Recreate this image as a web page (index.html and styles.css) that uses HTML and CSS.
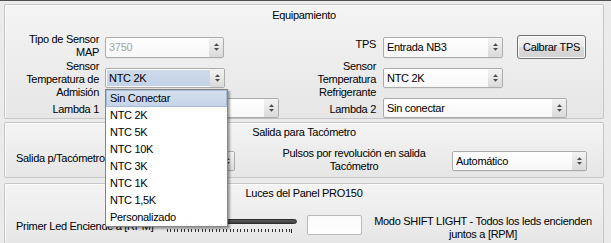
FILE: index.html
```html
<!DOCTYPE html>
<html lang="es">
<head>
<meta charset="utf-8">
<title>Equipamiento</title>
<link rel="stylesheet" href="styles.css">
</head>
<body>
<div class="window">
  <section class="group g-equip">
    <div class="gtitle">Equipamiento</div>
    <div class="eq-grid">
      <div class="lbl lbl-map">Tipo de Sensor<br>MAP</div>
      <div class="combo c-map disabled"><span class="val">3750</span><span class="arr"><svg width="7" height="10" viewBox="0 0 7 10"><path d="M1 4L3.5 1.3L6 4ZM1 6L3.5 8.7L6 6Z" fill="#4a4a4a"/></svg></span></div>
      <div class="lbl r lbl-tps">TPS</div>
      <div class="tps-cell">
        <div class="combo c-tps"><span class="val">Entrada NB3</span><span class="arr"><svg width="7" height="10" viewBox="0 0 7 10"><path d="M1 4L3.5 1.3L6 4ZM1 6L3.5 8.7L6 6Z" fill="#4a4a4a"/></svg></span></div>
        <button class="btn">Calbrar TPS</button>
      </div>

      <div class="lbl lbl-3">Sensor<br>Temperatura de<br>Admisión</div>
      <div class="combo c-iat focus"><span class="val">NTC 2K</span><span class="arr"><svg width="7" height="10" viewBox="0 0 7 10"><path d="M1 4L3.5 1.3L6 4ZM1 6L3.5 8.7L6 6Z" fill="#4a4a4a"/></svg></span></div>
      <div class="lbl r lbl-3">Sensor<br>Temperatura<br>Refrigerante</div>
      <div class="combo c-ect"><span class="val">NTC 2K</span><span class="arr"><svg width="7" height="10" viewBox="0 0 7 10"><path d="M1 4L3.5 1.3L6 4ZM1 6L3.5 8.7L6 6Z" fill="#4a4a4a"/></svg></span></div>

      <div class="lbl lbl-lam">Lambda 1</div>
      <div class="combo c-l1"><span class="val"></span><span class="arr"><svg width="7" height="10" viewBox="0 0 7 10"><path d="M1 4L3.5 1.3L6 4ZM1 6L3.5 8.7L6 6Z" fill="#4a4a4a"/></svg></span></div>
      <div class="lbl r lbl-lam">Lambda 2</div>
      <div class="combo c-l2"><span class="val">Sin conectar</span><span class="arr"><svg width="7" height="10" viewBox="0 0 7 10"><path d="M1 4L3.5 1.3L6 4ZM1 6L3.5 8.7L6 6Z" fill="#4a4a4a"/></svg></span></div>
    </div>
  </section>

  <section class="group g-tach">
    <div class="gtitle">Salida para Tacómetro</div>
    <div class="row2">
      <div class="lbl-sal">Salida p/Tacómetro</div>
      <div class="combo c-sal"><span class="val"></span><span class="arr"><svg width="7" height="10" viewBox="0 0 7 10"><path d="M1 4L3.5 1.3L6 4ZM1 6L3.5 8.7L6 6Z" fill="#4a4a4a"/></svg></span></div>
      <div class="lbl-pul">Pulsos por revolución en salida<br>Tacómetro</div>
      <div class="combo c-auto"><span class="val">Automático</span><span class="arr"><svg width="7" height="10" viewBox="0 0 7 10"><path d="M1 4L3.5 1.3L6 4ZM1 6L3.5 8.7L6 6Z" fill="#4a4a4a"/></svg></span></div>
    </div>
  </section>

  <section class="group g-leds">
    <div class="gtitle">Luces del Panel PRO150</div>
    <div class="row3">
      <div class="lbl-led">Primer Led Enciende a [RPM]</div>
      <div class="slider">
        <div class="groove"></div>
        <div class="ticks"></div>
      </div>
      <div class="edit"></div>
      <div class="lbl-shift">Modo SHIFT LIGHT - Todos los leds encienden<br>juntos a [RPM]</div>
    </div>
  </section>

  <ul class="popup">
    <li class="sel">Sin Conectar</li>
    <li>NTC 2K</li>
    <li>NTC 5K</li>
    <li>NTC 10K</li>
    <li>NTC 3K</li>
    <li>NTC 1K</li>
    <li>NTC 1,5K</li>
    <li>Personalizado</li>
  </ul>
</div>
</body>
</html>
```

FILE: styles.css
```css
html, body {
  margin: 0;
  padding: 0;
}
body {
  width: 611px;
  height: 243px;
  overflow: hidden;
  background: #ebebeb;
  font-family: "Liberation Sans", Arial, sans-serif;
  font-size: 11px;
  letter-spacing: -0.3px;
  line-height: 13px;
  color: #000;
}
.window {
  position: relative;
  box-sizing: border-box;
  height: 243px;
  overflow: hidden;
  border-top: 1px solid #4f4f4f;
  padding: 3px 7px 0 4px;
}
.group {
  box-sizing: border-box;
  border: 1px solid #c6c6c6;
  border-radius: 2px;
  background: linear-gradient(#f4f4f4, #e6e6e6);
  box-shadow: inset 1px 1px 0 #fbfbfb;
}
.gtitle {
  height: 13px;
  text-align: center;
}

/* ---------- Equipamiento ---------- */
.g-equip {
  height: 115px;
  padding-top: 4px;
}
.eq-grid {
  display: grid;
  grid-template-columns: 100px 184px 94px 1fr;
  grid-template-rows: 28px 34px 23px;
  align-items: center;
  margin-top: 11px;
}
.lbl {
  text-align: right;
  padding-right: 6px;
}
.lbl.r {
  padding-right: 7px;
}
.lbl-map { margin-bottom: 3px; }
.lbl-tps { margin-bottom: 6px; }
.lbl-3 { margin-top: 2px; }
.lbl-lam { margin-top: 5px; }
.tps-cell {
  display: flex;
  align-items: center;
}

/* ---------- combo boxes ---------- */
.combo {
  box-sizing: border-box;
  display: flex;
  height: 20px;
  border: 1px solid #acacac;
  border-radius: 2px;
  background: linear-gradient(#ffffff, #f7f7f7);
  box-shadow: 0 1px 0 rgba(0, 0, 0, 0.04);
}
.combo .val {
  flex: 1;
  padding-left: 3px;
  line-height: 18px;
  white-space: nowrap;
  overflow: hidden;
}
.combo .arr {
  width: 14px;
  display: flex;
  align-items: center;
  justify-content: center;
  background: linear-gradient(#f3f3f3, #dadada);
  border-radius: 0 1px 1px 0;
}
.combo.disabled .val {
  color: #a3a3a3;
}
.combo.focus .val {
  margin: 1px 0 1px 1px;
  padding-left: 2px;
  line-height: 16px;
  background: linear-gradient(#cddbeb, #c3d3e6);
}
.c-map { width: 119px; height: 21px; }
.c-tps { width: 120px; height: 21px; }
.c-iat { width: 120px; }
.c-ect { width: 120px; }
.c-l1 { width: 174px; margin-top: 2px; }
.c-l2 { width: 184px; margin-top: 2px; }

.btn {
  box-sizing: border-box;
  width: 69px;
  height: 24px;
  margin-left: 14px;
  padding: 0;
  border: 1px solid #707070;
  border-radius: 3px;
  background: linear-gradient(#f4f4f4 0%, #e9e9e9 50%, #dadada 51%, #d2d2d2 100%);
  box-shadow: inset 0 0 0 1px #fafafa;
  font: inherit;
  letter-spacing: inherit;
  color: #000;
}

/* ---------- Tacómetro ---------- */
.g-tach {
  height: 56px;
  margin-top: 3px;
  padding-top: 3px;
}
.row2 {
  display: flex;
  align-items: center;
  height: 28px;
  margin-top: 8px;
  padding-left: 11px;
}
.lbl-sal {
  width: 97px;
  margin-bottom: 6px;
  white-space: nowrap;
}
.c-sal { width: 122px; }
.lbl-pul {
  width: 160px;
  margin-left: 39px;
  margin-bottom: 2px;
  text-align: center;
  white-space: nowrap;
}
.c-auto {
  width: 135px;
  margin-left: 18px;
}

/* ---------- Luces ---------- */
.g-leds {
  height: 61px;
  margin-top: 5px;
  padding-top: 3px;
  border-bottom-color: transparent;
}
.row3 {
  display: flex;
  align-items: center;
  height: 36px;
  margin-top: 7px;
  padding-left: 11px;
}
.lbl-led {
  width: 149px;
  margin-top: 2px;
  white-space: nowrap;
}
.slider {
  width: 132px;
  display: flex;
  flex-direction: column;
  margin-top: 1px;
}
.groove {
  box-sizing: border-box;
  height: 5px;
  border: 1px solid #2e2e2e;
  border-radius: 3px;
  background: linear-gradient(#5a5a5a, #404040);
}
.ticks {
  height: 4px;
  margin: 5px 5px 0 2px;
  background:
    linear-gradient(#222, #222) right top / 1px 5px no-repeat,
    repeating-linear-gradient(to right, #303030 0 1px, transparent 1px 3.5px) left top / 100% 3px no-repeat;
}
.edit {
  box-sizing: border-box;
  width: 55px;
  height: 20px;
  margin-left: 10px;
  border: 1px solid #b9b9b9;
  border-radius: 2px;
  background: linear-gradient(#fafafa, #ffffff);
}
.lbl-shift {
  width: 222px;
  margin-left: 10px;
  margin-top: 6px;
  text-align: center;
  white-space: nowrap;
}

/* ---------- dropdown popup ---------- */
.popup {
  position: absolute;
  left: 105px;
  top: 88px;
  box-sizing: border-box;
  width: 123px;
  height: 138px;
  margin: 0;
  padding: 0;
  list-style: none;
  border: 1px solid #858585;
  background: #fff;
  box-shadow: 2px 2px 2px rgba(0, 0, 0, 0.35);
}
.popup li {
  height: 17px;
  line-height: 17px;
  padding-left: 4px;
  white-space: nowrap;
}
.popup li.sel {
  background: linear-gradient(#d6e1ee, #c3d3e7);
  box-shadow: inset 0 0 0 1px #a7bcd6;
}
```
